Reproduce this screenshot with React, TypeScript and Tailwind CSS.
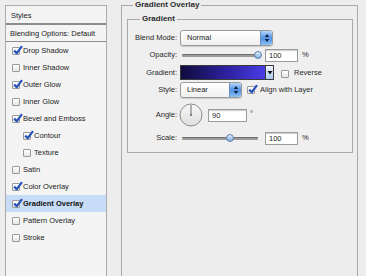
import React from "react";

const font = { fontFamily: '"Liberation Sans", Arial, sans-serif' };

const styleItems: { label: string; checked: boolean; indent?: boolean; selected?: boolean }[] = [
  { label: "Drop Shadow", checked: true },
  { label: "Inner Shadow", checked: false },
  { label: "Outer Glow", checked: true },
  { label: "Inner Glow", checked: false },
  { label: "Bevel and Emboss", checked: true },
  { label: "Contour", checked: true, indent: true },
  { label: "Texture", checked: false, indent: true },
  { label: "Satin", checked: false },
  { label: "Color Overlay", checked: true },
  { label: "Gradient Overlay", checked: true, selected: true },
  { label: "Pattern Overlay", checked: false },
  { label: "Stroke", checked: false },
];

function CheckBox({ checked }: { checked: boolean }) {
  return (
    <span className="relative inline-block w-[8px] h-[8px] shrink-0 border border-[#9a9a9a] bg-gradient-to-b from-white to-[#e6e6e6] rounded-[1px]">
      {checked && (
        <svg className="absolute left-[0px] top-[-3px]" width="10" height="10" viewBox="0 0 10 10">
          <path d="M1.2 5.6 L3.8 8.2 L9 1.2" stroke="#2553b8" strokeWidth="2.2" fill="none" strokeLinejoin="round" />
        </svg>
      )}
    </span>
  );
}

function Stepper() {
  return (
    <span className="flex items-center justify-center w-[12px] h-full rounded-r-[3px] bg-gradient-to-b from-[#b6d6fb] via-[#4f90e3] to-[#8fc0f5] border-l border-[#6a8fc0]">
      <svg width="6" height="10" viewBox="0 0 6 10">
        <path d="M3 1 L5.2 4 L0.8 4 Z" fill="#0d1e3a" />
        <path d="M3 9 L5.2 6 L0.8 6 Z" fill="#0d1e3a" />
      </svg>
    </span>
  );
}

function Select({ value, width }: { value: string; width: string }) {
  return (
    <div className={`flex h-[16px] ${width} rounded-[3px] border border-[#9a9a9a] bg-gradient-to-b from-white to-[#f0f0f0] shadow-[0_1px_1px_rgba(0,0,0,0.15)]`}>
      <span className="flex-1 pl-[6px] leading-[14px] text-[7.5px] text-[#1b1b1b]">{value}</span>
      <Stepper />
    </div>
  );
}

function Slider({ pos }: { pos: number }) {
  return (
    <div className="relative ml-[2px] w-[76px] h-[8px] flex items-center">
      <div className="w-full h-[3px] bg-[#9b9b9b] border-t border-[#6f6f6f] rounded-[1px]" />
      <div
        className="absolute top-[0px] w-[8px] h-[8px] rounded-full border border-[#5d7fae] bg-gradient-to-b from-[#e6f0fc] to-[#7fa9de]"
        style={{ left: `calc(${pos}% - 4px)` }}
      />
    </div>
  );
}

function NumField({ value, width }: { value: string; width: string }) {
  return (
    <div className={`h-[13px] ${width} border border-[#9c9c9c] bg-white shadow-[inset_0_1px_1px_rgba(0,0,0,0.2)] pl-[3px] leading-[11px] text-[7.5px] text-[#1b1b1b]`}>
      {value}
    </div>
  );
}

function Label({ text }: { text: string }) {
  return <span className="w-[49px] mr-[3px] text-right text-[7.5px] text-[#2a2a2a]">{text}</span>;
}

export default function App() {
  return (
    <div className="w-[366px] h-[276px] overflow-hidden bg-[#ededed] flex items-start" style={font}>
      {/* Styles list */}
      <div className="ml-[5px] mt-[5px] w-[102px] h-[290px] border border-[#ababab] bg-[#f4f4f4] shrink-0">
        <div className="h-[19px] pl-[5px] leading-[20px] text-[7.5px] text-[#222] border-b-2 border-[#8c8c8c]">Styles</div>
        <div className="h-[17px] pl-[4px] leading-[18px] text-[7.5px] text-[#222] border-b border-[#8f8f8f]">
          Blending Options: Default
        </div>
        {styleItems.map((it) => (
          <div
            key={it.label}
            className={`flex items-center h-[17px] gap-[3px] ${it.indent ? "pl-[17px]" : "pl-[6px]"} ${it.selected ? "bg-[#c7dcf6]" : ""}`}
          >
            <CheckBox checked={it.checked} />
            <span className={`text-[7.5px] ${it.selected ? "font-bold text-[#111]" : "text-[#222]"}`}>{it.label}</span>
          </div>
        ))}
      </div>

      {/* Gradient Overlay panel */}
      <fieldset className="ml-[14px] w-[237px] h-[300px] border border-[#a9a9a9] pl-[5px] pr-[4px] shrink-0">
        <legend className="ml-[6px] px-[2px] leading-[10px] text-[8px] font-bold text-[#2a2a2a]">Gradient Overlay</legend>
        <fieldset className="mt-[4px] border border-[#a9a9a9] bg-[#efefef] pb-[7px]">
          <legend className="ml-[12px] px-[2px] leading-[10px] text-[8px] font-bold text-[#2a2a2a]">Gradient</legend>
          <div className="pt-[5px] flex flex-col">
            <div className="h-[17px] flex items-center">
              <Label text="Blend Mode:" />
              <Select value="Normal" width="w-[93px]" />
            </div>
            <div className="h-[18px] flex items-center">
              <Label text="Opacity:" />
              <Slider pos={100} />
              <div className="ml-[7px]">
                <NumField value="100" width="w-[33px]" />
              </div>
              <span className="ml-[4px] text-[7.5px] text-[#2a2a2a]">%</span>
            </div>
            <div className="h-[17px] flex items-center">
              <Label text="Gradient:" />
              <div className="flex h-[15px] border border-[#3a3a3a]">
                <div className="w-[84px] h-full bg-gradient-to-r from-[#100c3e] via-[#2a1f9a] to-[#4a3ce6]" />
                <div className="w-[8px] h-full flex items-center justify-center bg-gradient-to-b from-[#eef5fd] to-[#a9c9ef] border-l border-[#3a3a3a]">
                  <svg width="6" height="5" viewBox="0 0 6 5">
                    <path d="M0.5 1 L5.5 1 L3 4.5 Z" fill="#111" />
                  </svg>
                </div>
              </div>
              <span className="ml-[7px]">
                <CheckBox checked={false} />
              </span>
              <span className="ml-[5px] text-[7.5px] text-[#2a2a2a]">Reverse</span>
            </div>
            <div className="h-[18px] flex items-center">
              <Label text="Style:" />
              <Select value="Linear" width="w-[62px]" />
              <span className="ml-[5px] flex items-center">
                <CheckBox checked={true} />
              </span>
              <span className="ml-[5px] text-[7.5px] text-[#2a2a2a]">Align with Layer</span>
            </div>
            <div className="h-[32px] flex items-center">
              <Label text="Angle:" />
              <svg className="ml-[-1px]" width="24" height="24" viewBox="0 0 24 24">
                <defs>
                  <linearGradient id="dial" x1="0" y1="0" x2="0" y2="1">
                    <stop offset="0" stopColor="#f7f7f7" />
                    <stop offset="1" stopColor="#dedede" />
                  </linearGradient>
                </defs>
                <circle cx="12" cy="12" r="11" fill="url(#dial)" stroke="#8e8e8e" strokeWidth="1" />
                <line x1="12" y1="12" x2="12" y2="2" stroke="#6e6e6e" strokeWidth="1" />
                <circle cx="12" cy="12" r="0.9" fill="#555" />
              </svg>
              <div className="ml-[5px]">
                <NumField value="90" width="w-[39px]" />
              </div>
              <span className="ml-[3px] self-start mt-[9px] text-[7.5px] text-[#2a2a2a]">°</span>
            </div>
            <div className="h-[14px] flex items-center">
              <Label text="Scale:" />
              <Slider pos={63} />
              <div className="ml-[7px]">
                <NumField value="100" width="w-[33px]" />
              </div>
              <span className="ml-[4px] text-[7.5px] text-[#2a2a2a]">%</span>
            </div>
          </div>
        </fieldset>
      </fieldset>
    </div>
  );
}
